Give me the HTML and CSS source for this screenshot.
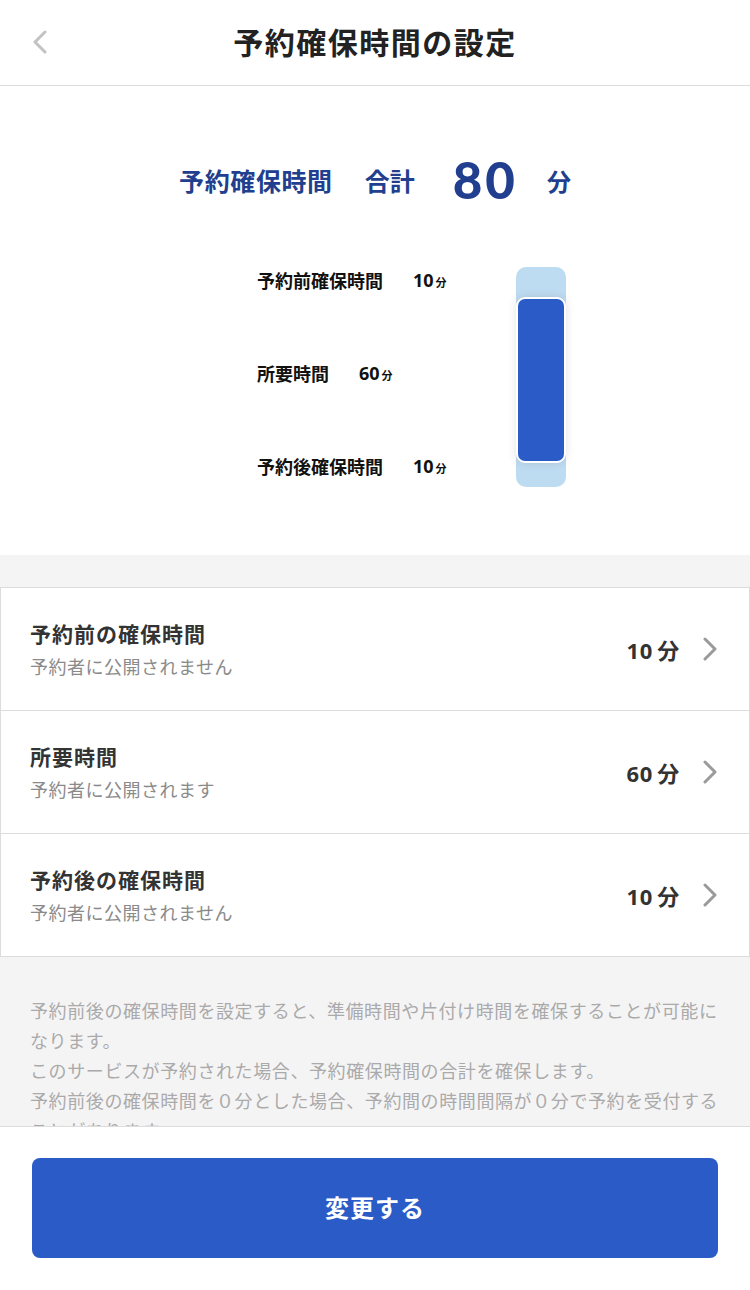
FILE: index.html
```html
<!DOCTYPE html>
<html lang="ja">
<head>
<meta charset="utf-8">
<title>予約確保時間の設定</title>
<link rel="stylesheet" href="styles.css">
</head>
<body>
<div class="screen">
  <header class="header">
    <svg class="back" width="16" height="24" viewBox="0 0 16 24"><path d="M13 2 L3 12 L13 22" fill="none" stroke="#c2c2c2" stroke-width="3" stroke-linecap="round" stroke-linejoin="round"/></svg>
    <h1 class="title">予約確保時間の設定</h1>
  </header>
  <main class="main">
    <section class="summary">
      <div class="total">
        <span class="total-label">予約確保時間</span>
        <span class="total-sum">合計</span>
        <span class="total-num">80</span>
        <span class="total-unit">分</span>
      </div>
      <div class="chart">
        <div class="chart-labels">
          <div class="chart-row"><span class="chart-name">予約前確保時間</span><span class="chart-val">10<small>分</small></span></div>
          <div class="chart-row"><span class="chart-name">所要時間</span><span class="chart-val">60<small>分</small></span></div>
          <div class="chart-row"><span class="chart-name">予約後確保時間</span><span class="chart-val">10<small>分</small></span></div>
        </div>
        <div class="bar">
          <div class="bar-main"></div>
        </div>
      </div>
    </section>
    <div class="list">
      <div class="item">
        <div class="item-text">
          <div class="item-title">予約前の確保時間</div>
          <div class="item-sub">予約者に公開されません</div>
        </div>
        <div class="item-value">10<span class="unit">分</span></div>
        <svg class="chev" width="16" height="24" viewBox="0 0 16 24"><path d="M3 2 L13 12 L3 22" fill="none" stroke="#9a9a9a" stroke-width="3" stroke-linecap="round" stroke-linejoin="round"/></svg>
      </div>
      <div class="item">
        <div class="item-text">
          <div class="item-title">所要時間</div>
          <div class="item-sub">予約者に公開されます</div>
        </div>
        <div class="item-value">60<span class="unit">分</span></div>
        <svg class="chev" width="16" height="24" viewBox="0 0 16 24"><path d="M3 2 L13 12 L3 22" fill="none" stroke="#9a9a9a" stroke-width="3" stroke-linecap="round" stroke-linejoin="round"/></svg>
      </div>
      <div class="item">
        <div class="item-text">
          <div class="item-title">予約後の確保時間</div>
          <div class="item-sub">予約者に公開されません</div>
        </div>
        <div class="item-value">10<span class="unit">分</span></div>
        <svg class="chev" width="16" height="24" viewBox="0 0 16 24"><path d="M3 2 L13 12 L3 22" fill="none" stroke="#9a9a9a" stroke-width="3" stroke-linecap="round" stroke-linejoin="round"/></svg>
      </div>
    </div>
    <div class="note">
      <p>予約前後の確保時間を設定すると、準備時間や片付け時間を確保することが可能になります。</p>
      <p>このサービスが予約された場合、予約確保時間の合計を確保します。</p>
      <p>予約前後の確保時間を０分とした場合、予約間の時間間隔が０分で予約を受付することがあります。</p>
    </div>
  </main>
  <footer class="footer">
    <button class="submit">変更する</button>
  </footer>
</div>
</body>
</html>
```
FILE: styles.css
```css
* { box-sizing: border-box; }
html, body { margin: 0; padding: 0; }
body {
  font-family: "Noto Sans CJK JP", "Noto Sans", sans-serif;
  background: #fff;
  color: #222;
}
.screen {
  width: 750px;
  height: 1290px;
  display: flex;
  flex-direction: column;
  overflow: hidden;
}
.header {
  height: 86px;
  flex: none;
  border-bottom: 1px solid #dcdcdc;
  display: flex;
  align-items: center;
  justify-content: center;
  position: relative;
}
.back {
  position: absolute;
  left: 32px;
  top: 30px;
}
.title {
  margin: 0;
  font-size: 30px;
  font-weight: 700;
  letter-spacing: 1.5px;
  color: #222;
  line-height: 40px;
  padding-bottom: 4px;
}
.main {
  flex: 1;
  overflow: hidden;
  background: #f5f4f5;
}
.summary {
  background: #fff;
  padding: 69px 0 68px;
}
.total {
  display: flex;
  justify-content: center;
  align-items: center;
  height: 50px;
  color: #213f8e;
  font-weight: 700;
}
.total-label { font-size: 25px; letter-spacing: 0.6px; margin-right: 32px; }
.total-sum { font-size: 25px; margin-right: 38px; }
.total-num {
  font-family: Lato, "Noto Sans", sans-serif;
  font-weight: 900;
  font-size: 51px;
  letter-spacing: 3px;
  margin-right: 29px;
  line-height: 50px;
}
.total-unit { font-size: 24px; }
.chart {
  margin-top: 62px;
  display: flex;
  padding-left: 257px;
  height: 220px;
}
.chart-labels {
  width: 259px;
  display: flex;
  flex-direction: column;
  gap: 67px;
}
.chart-row {
  height: 26px;
  display: flex;
  align-items: center;
  gap: 30px;
  font-size: 18px;
  font-weight: 700;
  color: #111;
}
.chart-val {
  font-family: "Noto Sans", sans-serif;
  font-size: 18px;
  font-weight: 700;
}
.chart-val small {
  font-family: "Noto Sans CJK JP", sans-serif;
  font-size: 11px;
  margin-left: 2px;
}
.bar {
  width: 50px;
  height: 220px;
  background: #bedcf1;
  border-radius: 10px;
  padding-top: 30px;
}
.bar-main {
  height: 166px;
  background: #2a5bc6;
  border: 2px solid #fff;
  border-radius: 9px;
  box-shadow: 0 0 10px rgba(0, 0, 0, 0.12);
}
.list {
  margin-top: 32px;
  background: #fff;
  border: 1px solid #dcdcdc;
}
.item {
  height: 123px;
  display: flex;
  align-items: center;
  padding: 0 31px 0 29px;
  border-bottom: 1px solid #dcdcdc;
}
.item:last-child { border-bottom: none; height: 122px; }
.item-text { flex: 1; }
.item-title {
  font-size: 21px;
  font-weight: 700;
  letter-spacing: 1px;
  line-height: 30px;
  color: #333;
}
.item-sub {
  font-size: 18px;
  line-height: 30px;
  color: #8a8a8a;
  letter-spacing: 0.5px;
  margin-top: 3px;
}
.item-value {
  font-family: "Noto Sans", sans-serif;
  font-size: 22px;
  font-weight: 700;
  color: #333;
  margin-right: 22px;
  letter-spacing: 0.8px;
}
.item-value .unit {
  font-family: "Noto Sans CJK JP", sans-serif;
  margin-left: 4px;
}
.note {
  padding: 38px 30px 0;
  color: #aaa;
  font-size: 18px;
  line-height: 30px;
  letter-spacing: 0.6px;
}
.note p { margin: 0; }
.footer {
  height: 164px;
  flex: none;
  border-top: 1px solid #dcdcdc;
  background: #fff;
  padding: 31px 32px 0;
}
.submit {
  width: 100%;
  height: 100px;
  border: none;
  border-radius: 8px;
  background: #2a5bc6;
  color: #fff;
  font-family: "Noto Sans CJK JP", sans-serif;
  font-size: 24px;
  font-weight: 700;
  letter-spacing: 1px;
  padding-bottom: 4px;
}
```
